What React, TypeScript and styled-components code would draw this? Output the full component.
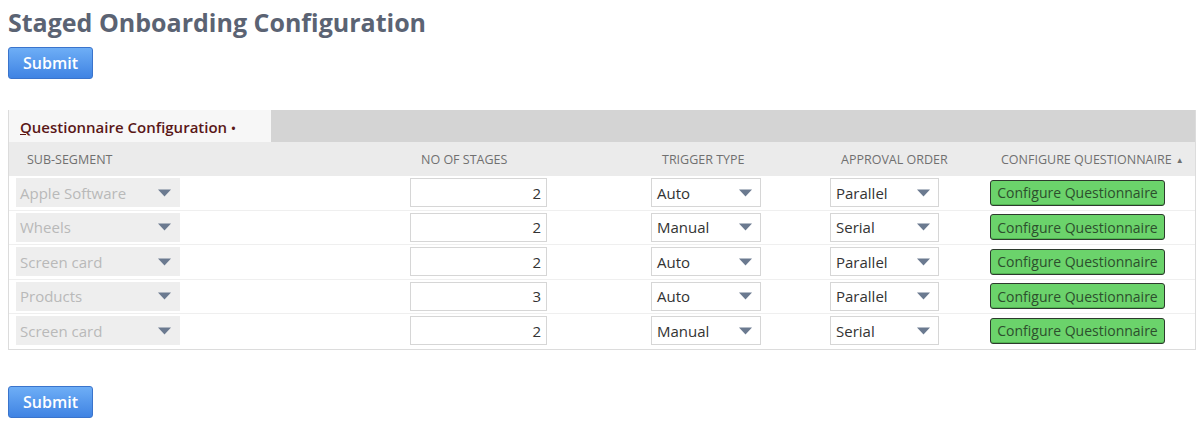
import React from "react";
import styled, { createGlobalStyle } from "styled-components";

type Row = {
  segment: string;
  stages: number;
  trigger: string;
  approval: string;
};

const rows: Row[] = [
  { segment: "Apple Software", stages: 2, trigger: "Auto", approval: "Parallel" },
  { segment: "Wheels", stages: 2, trigger: "Manual", approval: "Serial" },
  { segment: "Screen card", stages: 2, trigger: "Auto", approval: "Parallel" },
  { segment: "Products", stages: 3, trigger: "Auto", approval: "Parallel" },
  { segment: "Screen card", stages: 2, trigger: "Manual", approval: "Serial" },
];

const Arrow: React.FC = () => (
  <svg width="13" height="8" viewBox="0 0 13 8">
    <path d="M0 0.5 H13 L6.5 7.5 Z" fill="#6b7a90" />
  </svg>
);

const App: React.FC = () => {
  return (
    <>
      <GlobalStyle />
      <Page>
        <Title>Staged Onboarding Configuration</Title>
        <SubmitButton>Submit</SubmitButton>

        <Panel>
          <TabBar>
            <Tab>
              <u>Q</u>uestionnaire Configuration <Dot>•</Dot>
            </Tab>
          </TabBar>

          <Grid>
            <HeaderCell>Sub-Segment</HeaderCell>
            <HeaderCell>No of Stages</HeaderCell>
            <HeaderCell>Trigger Type</HeaderCell>
            <HeaderCell>Approval Order</HeaderCell>
            <HeaderCell>
              Configure Questionnaire <SortMark>▲</SortMark>
            </HeaderCell>

            {rows.map((row, i) => (
              <React.Fragment key={i}>
                <Cell $last={i === rows.length - 1}>
                  <Select $disabled $width={164}>
                    <span>{row.segment}</span>
                    <Arrow />
                  </Select>
                </Cell>
                <Cell $last={i === rows.length - 1}>
                  <NumberInput>{row.stages}</NumberInput>
                </Cell>
                <Cell $last={i === rows.length - 1}>
                  <Select $width={110}>
                    <span>{row.trigger}</span>
                    <Arrow />
                  </Select>
                </Cell>
                <Cell $last={i === rows.length - 1}>
                  <Select $width={109}>
                    <span>{row.approval}</span>
                    <Arrow />
                  </Select>
                </Cell>
                <Cell $last={i === rows.length - 1}>
                  <ConfigureButton>Configure Questionnaire</ConfigureButton>
                </Cell>
              </React.Fragment>
            ))}
          </Grid>
        </Panel>

        <BottomBar>
          <SubmitButton>Submit</SubmitButton>
        </BottomBar>
      </Page>
    </>
  );
};

const GlobalStyle = createGlobalStyle`
  body {
    margin: 0;
    background: #ffffff;
    font-family: "Open Sans", "Liberation Sans", sans-serif;
  }
`;

const Page = styled.div`
  padding: 5px 4px 0 8px;
  display: flex;
  flex-direction: column;
  align-items: flex-start;
`;

const Title = styled.h1`
  margin: 0 0 8px;
  font-size: 25px;
  line-height: 34px;
  font-weight: 700;
  color: #5b6373;
`;

const SubmitButton = styled.button`
  width: 85px;
  height: 32px;
  padding: 0;
  border: 1px solid #3a74cc;
  border-radius: 3px;
  background: linear-gradient(#6eaef6, #3f83e3);
  color: #ffffff;
  font-family: "Open Sans", "Liberation Sans", sans-serif;
  font-size: 16px;
  font-weight: 600;
  cursor: pointer;
`;

const Panel = styled.div`
  margin-top: 31px;
  width: 1188px;
  border: 1px solid #dcdcdc;
  border-top: none;
  box-sizing: border-box;
`;

const TabBar = styled.div`
  display: flex;
  height: 32px;
  background: #d4d4d4;
`;

const Tab = styled.div`
  width: 262px;
  box-sizing: border-box;
  padding: 7px 0 0 11px;
  background: #f7f7f7;
  color: #5a1717;
  font-size: 15px;
  font-weight: 600;
  white-space: nowrap;
`;

const Dot = styled.span`
  font-size: 13px;
`;

const Grid = styled.div`
  display: grid;
  grid-template-columns: 394px 241px 179px 160px 1fr;
`;

const HeaderCell = styled.div`
  height: 34px;
  display: flex;
  align-items: center;
  padding-left: 18px;
  background: #ebebeb;
  color: #707070;
  font-size: 12.5px;
  text-transform: uppercase;
  white-space: nowrap;
`;

const SortMark = styled.span`
  margin-left: 4px;
  font-size: 8px;
`;

const Cell = styled.div<{ $last?: boolean }>`
  height: 34.5px;
  box-sizing: border-box;
  display: flex;
  align-items: center;
  padding-left: 7px;
  border-bottom: 1px solid ${({ $last }) => ($last ? "transparent" : "#efefef")};
  background: #ffffff;
`;

const Select = styled.div<{ $disabled?: boolean; $width: number }>`
  width: ${({ $width }) => $width}px;
  height: 29px;
  box-sizing: border-box;
  display: flex;
  align-items: center;
  justify-content: space-between;
  padding: 0 8px 0 ${({ $disabled }) => ($disabled ? "3px" : "5px")};
  background: ${({ $disabled }) => ($disabled ? "#eeeeee" : "#ffffff")};
  border: 1px solid ${({ $disabled }) => ($disabled ? "#eeeeee" : "#d6d6d6")};
  color: ${({ $disabled }) => ($disabled ? "#b9b9b9" : "#333333")};
  font-size: 15px;
`;

const NumberInput = styled.div`
  width: 137px;
  height: 29px;
  box-sizing: border-box;
  display: flex;
  align-items: center;
  justify-content: flex-end;
  padding-right: 5px;
  border: 1px solid #d6d6d6;
  color: #333333;
  font-size: 15px;
`;

const ConfigureButton = styled.button`
  width: 175px;
  height: 26px;
  padding: 0;
  border: 1px solid #2e3a2e;
  border-radius: 3px;
  background: #6bd36b;
  box-shadow: inset 0 -1px 0 #52b552;
  color: #2d4f2d;
  font-family: "Open Sans", "Liberation Sans", sans-serif;
  font-size: 14px;
  cursor: pointer;
`;

const BottomBar = styled.div`
  margin-top: 36px;
`;

export default App;
